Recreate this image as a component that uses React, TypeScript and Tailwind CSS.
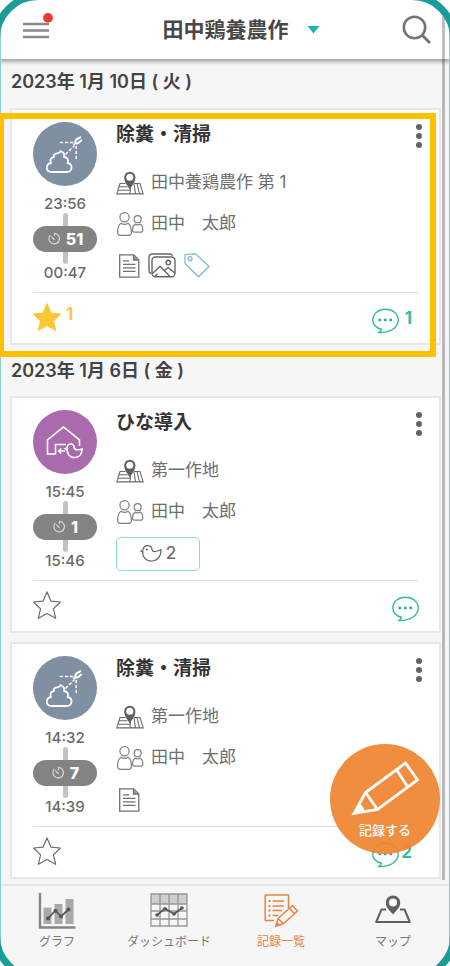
import React from "react";

type RecordItem = {
  id: string;
  kind: "clean" | "chick";
  title: string;
  place: string;
  person: string;
  start: string;
  end: string;
  minutes: number;
  stars?: number;
  comments?: number;
  attachments?: ("doc" | "image" | "tag")[];
  chicks?: number;
};

const cleanFirst: RecordItem = {
  id: "r1",
  kind: "clean",
  title: "除糞・清掃",
  place: "田中養鶏農作 第 1",
  person: "田中　太郎",
  start: "23:56",
  end: "00:47",
  minutes: 51,
  stars: 1,
  comments: 1,
  attachments: ["doc", "image", "tag"],
};

const laterRecords: RecordItem[] = [
  {
    id: "r2",
    kind: "chick",
    title: "ひな導入",
    place: "第一作地",
    person: "田中　太郎",
    start: "15:45",
    end: "15:46",
    minutes: 1,
    chicks: 2,
  },
  {
    id: "r3",
    kind: "clean",
    title: "除糞・清掃",
    place: "第一作地",
    person: "田中　太郎",
    start: "14:32",
    end: "14:39",
    minutes: 7,
    comments: 2,
    attachments: ["doc"],
  },
];

function CleanIcon() {
  return (
    <svg viewBox="0 0 64 64" className="size-16 rounded-full bg-[#8090a3]" fill="none" stroke="#fff" strokeWidth="1.8" strokeLinecap="round" strokeLinejoin="round" aria-hidden="true">
      <path d="M27.5 29C30.5 30 32 32.5 31 35C34.5 35.5 36 38 34.5 41C37.5 41.5 38.8 43.5 38.5 46C38.2 49 36.5 50 33.5 50H19C15.5 50 14 49 13.8 46C13.8 43.500 15 41.500 18 41C16.500 38 18 35.300 21 35C20.200 33 21.500 31.500 24 31.300C26 31 27.300 30.500 27.500 29Z" />
      <path d="M27.500 20.500h14M43.200 24.500v14M33 32l8-8" strokeWidth="1.500" strokeDasharray="2 3" />
      <path d="m44.500 16.500-1.800 2c-1.400 1.800.8 3.800 2.500 2.500l3-2.500M42.500 21l-1.500 1.500M47.200 15.200l-1.200 1.100" strokeWidth="2" />
    </svg>
  );
}

function ChickHouseIcon() {
  return (
    <svg viewBox="0 0 64 64" className="size-16 rounded-full bg-[#a96bae]" fill="none" stroke="#fff" strokeWidth="1.600" strokeLinejoin="miter" aria-hidden="true">
      <path d="M33 34.500H22.500V44h-8V30l16-13 16 13v6" />
      <path d="M32 41h-6.500M28.300 38.500 25.500 41l2.800 2.500" />
      <path d="M34.200 39.200c-.7-3 .9-5.200 3.200-5.200 2.500 0 3.700 1.800 3.800 3.600.2 2.400 4.300 2.700 7.900 1.500-.2 5.300-3.200 8.500-7.600 8.500-4.600 0-7.600-3.600-7.300-8.400Zm0-1.200-2 .8 1.800 1.200" />
    </svg>
  );
}

function ChickIcon() {
  return (
    <svg width="22" height="17" viewBox="0 0 22 17" fill="none" stroke="#666" strokeWidth="1.200" strokeLinejoin="round" aria-hidden="true">
      <path d="M3 4.800C3.400 2.300 5.200.7 7.600.7c2.700 0 4.300 1.900 4.500 4.100.2 2.500 4.600 2.200 8.900-.3.3 6.500-3.500 11.500-9.500 11.500-5.700 0-9.800-4.500-8.500-9.500L.7 6.200 3 4.800Z" />
      <circle cx="6.800" cy="4.500" r=".5" fill="#666" />
    </svg>
  );
}

function PlaceIcon() {
  return (
    <svg width="28" height="24" viewBox="0 0 28 24" fill="none" stroke="#6a6a6a" strokeWidth="1.100" aria-hidden="true">
      <path d="M9.500 12.500H4L.8 22.900h26.400L24 12.500h-6M3 15.700h8.500M2 19.200h12M14.500 17l-.5 6M18 13l1.500 9.700M21 12.700l2.500 10" />
      <path d="M13.800 18.500C11.800 14.800 8.200 11.500 8.200 6.300a5.600 5.600 0 0 1 11.200 0c0 5.200-3.600 8.500-5.600 12.200Z" fill="#606060" stroke="none" />
      <circle cx="13.800" cy="6.200" r="3.500" fill="#fff" stroke="none" />
    </svg>
  );
}

function PeopleIcon() {
  return (
    <svg width="28" height="24" viewBox="0 0 28 24" fill="none" stroke="#808080" strokeWidth="1.200" strokeLinejoin="round" aria-hidden="true">
      <circle cx="8.500" cy="5.200" r="4.600" />
      <path d="M5 11.200c2 1.300 5 1.300 7 0 2.500 1.500 3.400 5.300 3.400 9.100 0 2.100-.9 3.100-2.700 3.100H4.300c-1.800 0-2.700-1-2.700-3.100 0-3.800.9-7.600 3.400-9.100Z" />
      <circle cx="21.700" cy="7.200" r="3.500" />
      <path d="M19.200 12c1.500 1 3.500 1 5 0 1.900 1.300 2.600 3.700 2.600 6 0 1.500-.6 2.200-1.800 2.200h-6.600c-1.200 0-1.800-.7-1.800-2.200 0-2.300.7-4.700 2.600-6Z" />
    </svg>
  );
}

function DocIcon() {
  return (
    <svg width="22" height="24" viewBox="0 0 22 24" fill="none" stroke="#707070" strokeWidth="1.300" aria-hidden="true">
      <path d="M1.700.9h14.200l4.900 5v17.200H1.700V.9Z" />
      <path d="M15.500 1v5.200h5" fill="#999" />
      <path d="M5 6.800h6M5 10.300h12.500M5 13.800h12.500M5 17.300h12.500" />
    </svg>
  );
}

function ImageIcon() {
  return (
    <svg width="28" height="25" viewBox="0 0 28 25" fill="none" stroke="#666" strokeWidth="1.400" strokeLinejoin="round" aria-hidden="true">
      <path d="M3 20.500C1.500 20 1 19 1 17.500V4.500C1 2.300 2.200 1 4.500 1h17c1.700 0 2.600.5 3 1.800" />
      <rect x="4" y="4" width="23" height="19.800" rx="3.500" />
      <circle cx="20.300" cy="9.500" r="2.200" />
      <path d="m4.500 20.500 7.500-7.300 10 10.300M16.500 17.500l3.500-3 6.800 5.500M7 23.300l2.500-2.500" />
    </svg>
  );
}

function TagIcon() {
  return (
    <svg width="26" height="25" viewBox="0 0 26 25" fill="none" stroke="#79b2e0" strokeWidth="1.200" strokeLinejoin="round" aria-hidden="true">
      <path d="M1 1.500 11.700.9 25 13.500 14.500 23.800 1 10.500v-9Z" />
      <circle cx="6" cy="5.700" r="2" />
    </svg>
  );
}

function TimerIcon() {
  return (
    <svg width="14" height="14" viewBox="0 0 14 14" fill="none" stroke="#d8d8d8" strokeWidth="1.200" strokeLinecap="round" aria-hidden="true">
      <path d="M3 3.300a5.300 5.300 0 1 0 4.500-2v2.200M4.700 4.800l2.500 2.700" />
    </svg>
  );
}

function StarIcon({ filled }: { filled: boolean }) {
  return (
    <svg width="28" height="28" viewBox="0 0 28 28" fill={filled ? "#fcc737" : "none"} stroke={filled ? "#fcc737" : "#6b6b6b"} strokeWidth="1.200" strokeLinejoin="round" aria-hidden="true">
      <path d="m14 .9 4 9.300 9.400.8-7 6.900 2.300 9.400-8.700-4.800-8.700 4.800 2.300-9.400-7-6.900 9.400-.8L14 .9Z" />
    </svg>
  );
}

function CommentIcon() {
  return (
    <svg width="27" height="26" viewBox="0 0 27 26" fill="none" stroke="#35bca0" strokeWidth="1.400" strokeLinejoin="round" aria-hidden="true">
      <path d="M9.500 21.300C4.200 20 .8 16.500.8 12 .8 5.700 6.400 1.200 13.500 1.200S26.200 5.700 26.200 12c0 6.800-7 13-19.900 12.600 1.900-.8 3-1.800 3.200-3.300Z" />
      <g fill="#1eae92" stroke="none">
        <rect x="6.500" y="10.700" width="2.500" height="2.500" />
        <rect x="12" y="10.700" width="2.500" height="2.500" />
        <rect x="17.500" y="10.700" width="2.500" height="2.500" />
      </g>
    </svg>
  );
}

function RecordCard({ item }: { item: RecordItem }) {
  return (
    <article className="border-2 border-[#e8e8e8] bg-white pt-3 pr-5 pl-[21px]">
      <div className="flex gap-[19px] border-b border-[#dedede] pb-[5px]">
        <div className="flex w-16 shrink-0 flex-col items-center text-[15px] font-medium text-[#6a6a6a]">
          {item.kind === "clean" ? <CleanIcon /> : <ChickHouseIcon />}
          <time className="pt-2 leading-[19px]">{item.start}</time>
          <span className="h-[13px] w-[5px] rounded-t-full bg-[#c3c3c3]" />
          <span className="flex h-[26px] w-full items-center justify-center gap-[5px] rounded-full bg-[#838383] text-[16px] font-extrabold text-white">
            <TimerIcon />
            {item.minutes}
          </span>
          <span className="h-3 w-[5px] rounded-b-full bg-[#c3c3c3]" />
          <time className="leading-[18px]">{item.end}</time>
        </div>
        <div className="min-w-0 flex-1 text-[17px] text-[#6e6e6e]">
          <div className="flex h-10 items-start justify-between">
            <h3 className="text-[19px] leading-[26px] font-bold text-[#333]">{item.title}</h3>
            <button type="button" aria-label="メニュー" className="-mr-1 flex flex-col gap-[3px] px-px py-[2px]">
              <span className="size-[6px] rounded-full bg-[#646464]" />
              <span className="size-[6px] rounded-full bg-[#646464]" />
              <span className="size-[6px] rounded-full bg-[#646464]" />
            </button>
          </div>
          <p className="flex h-[41px] items-center gap-[7px]">
            <PlaceIcon />
            {item.place}
          </p>
          <p className="flex h-[41px] items-center gap-[7px]">
            <PeopleIcon />
            {item.person}
          </p>
          <div className="flex h-[43px] items-center gap-2 pl-[2px]">
            {item.attachments?.map((a) =>
              a === "doc" ? <DocIcon key={a} /> : a === "image" ? <ImageIcon key={a} /> : <TagIcon key={a} />
            )}
            {item.chicks !== undefined && (
              <button type="button" className="-ml-[2px] flex h-[34px] w-[84px] items-center justify-center gap-1 rounded-[5px] border border-[#8adbd2] font-medium">
                <ChickIcon />
                {item.chicks}
              </button>
            )}
          </div>
        </div>
      </div>
      <footer className="flex h-[50px] items-start justify-between pt-[10px] text-[17px] leading-[22px] font-bold">
        <button type="button" aria-label="お気に入り" className="flex items-start gap-[5px] text-[#fcc737]">
          <StarIcon filled={item.stars !== undefined} />
          {item.stars}
        </button>
        <button type="button" aria-label="コメント" className={item.comments ? "flex items-start gap-[2px] pt-[5px] pr-[7px] leading-5 text-[#35bca0]" : "flex pt-[5px]"}>
          <CommentIcon />
          {item.comments && <span className="w-[11px] text-right">{item.comments}</span>}
        </button>
      </footer>
    </article>
  );
}

function DateHeading({ children }: { children: React.ReactNode }) {
  return <h2 className="text-[18px] leading-6 font-semibold text-[#444]">{children}</h2>;
}

function GraphIcon() {
  return (
    <svg width="38" height="37" viewBox="0 0 38 37" fill="none" aria-hidden="true">
      <path d="M5.500 15.500h8V32h-8zM16.500 12h8v20h-8zM27.500 7h8v25h-8z" fill="#a9a9a9" />
      <path d="M2 1v34.500h35.500" stroke="#858585" strokeWidth="2.400" />
      <path d="m10 26.500 7.500-8 5.500 6 7.500-7" stroke="#555" strokeWidth="1.800" />
      <g fill="#555"><circle cx="10" cy="26.500" r="2" /><circle cx="17.500" cy="18.700" r="2" /><circle cx="23" cy="24.500" r="2" /><circle cx="30.500" cy="17.500" r="2" /></g>
    </svg>
  );
}

function DashboardIcon() {
  return (
    <svg width="38" height="37" viewBox="0 0 38 37" fill="none" aria-hidden="true">
      <path d="M1 2h36v10H1z" fill="#cfcfcf" />
      <path d="M1 2h36v32H1zM1 12h36M1 19h36M1 27h36M10 2v32M19 2v32M28 2v32" stroke="#969696" strokeWidth="1.300" />
      <path d="m7 23 8-6.500 9 5.500 8-6" stroke="#555" strokeWidth="1.800" />
      <g fill="#555"><circle cx="7" cy="23" r="1.800" /><circle cx="15" cy="16.700" r="1.800" /><circle cx="24" cy="22" r="1.800" /><circle cx="32" cy="16" r="1.800" /></g>
    </svg>
  );
}

function ListIcon() {
  return (
    <svg width="36" height="37" viewBox="0 0 36 37" fill="none" stroke="#e98343" strokeWidth="1.500" strokeLinejoin="round" aria-hidden="true">
      <path d="M11 28.500H2.200V3h23.300v13.500" />
      <path d="M9.500 9H21M9.500 14H21M9.500 18.500H19M9.500 23.500h6" />
      <path d="M5.500 9h2M5.500 14h2M5.500 18.500h2M5.500 23.500h2" strokeWidth="2" />
      <path d="m13 34 2-7.500 14.500-13 5 5.500-14 12.800L13 34Zm2-7.500 5.500 5.300M26.500 16.300l5 5.500" />
      <path d="m13 34 .8-3.200 2.200 2.200z" fill="#e98343" />
    </svg>
  );
}

function MapIcon() {
  return (
    <svg width="36" height="37" viewBox="0 0 36 37" fill="none" stroke="#606060" strokeWidth="2" strokeLinejoin="round" aria-hidden="true">
      <path d="M11 17.500H6.500L1.200 30h33.600l-5.300-12.500H25" />
      <path d="M18 22.500c-2.500-3.500-7.200-6.500-7.200-11.800a7.200 7.200 0 0 1 14.400 0c0 5.300-4.700 8.300-7.200 11.800Z" fill="#606060" stroke="none" />
      <circle cx="18" cy="10.500" r="4" fill="#f6f6f6" stroke="none" />
    </svg>
  );
}

const tabs = [
  { label: "グラフ", Icon: GraphIcon, active: false },
  { label: "ダッシュボード", Icon: DashboardIcon, active: false },
  { label: "記録一覧", Icon: ListIcon, active: true },
  { label: "マップ", Icon: MapIcon, active: false },
];

export default function App() {
  return (
    <div lang="ja" className="relative flex h-screen flex-col overflow-hidden bg-[#f6f6f6] font-['Inter','Noto_Sans_CJK_JP',sans-serif]">
      <header className="relative z-10 flex h-[59px] shrink-0 items-center justify-between bg-white pr-[18px] pl-[22px] shadow-[0_2px_4px_1px_rgba(0,0,0,0.32)]">
        <button type="button" aria-label="メニューを開く">
          <svg width="34" height="34" viewBox="0 0 34 34" aria-hidden="true">
            <path d="M1 11h26M1 17.500h26M1 24h26" stroke="#8a8a8a" strokeWidth="2.400" />
            <circle cx="26" cy="4.900" r="4.900" fill="#ee3737" />
          </svg>
        </button>
        <button type="button" className="flex items-center gap-[18px] pl-6 text-[21px] leading-7 font-bold text-[#484848]">
          田中鶏養農作
          <svg width="13" height="8" viewBox="0 0 13 8" aria-hidden="true"><path d="M.5 0h12l-6 7.500z" fill="#1fb5aa" /></svg>
        </button>
        <button type="button" aria-label="検索">
          <svg width="30" height="30" viewBox="0 0 30 30" fill="none" stroke="#757575" aria-hidden="true">
            <circle cx="12.500" cy="12.500" r="10.700" strokeWidth="2.600" />
            <path d="m20 20 8 8" strokeWidth="3" />
          </svg>
        </button>
      </header>

      <main className="relative min-h-0 flex-1">
        <div className="h-full overflow-hidden pr-[9px] pl-[10px]">
          <section>
            <div className="px-px pt-[11px] pb-[14px]">
              <DateHeading>2023年 1月 10日 ( 火 )</DateHeading>
            </div>
            <div className="relative">
              <RecordCard item={cleanFirst} />
              <div className="pointer-events-none absolute top-[5px] right-[5px] -bottom-3 -left-3 z-40 border-[6px] border-[#ffc000]" />
            </div>
          </section>
          <section>
            <div className="px-px pt-[14px] pb-[13px]">
              <DateHeading>2023年 1月 6日 ( 金 )</DateHeading>
            </div>
            <div className="flex flex-col gap-[9px]">
              {laterRecords.map((item) => (
                <RecordCard key={item.id} item={item} />
              ))}
            </div>
          </section>
        </div>
        <button type="button" className="absolute right-[10px] bottom-[30px] size-[110px] rounded-full bg-[#f08430]/93 text-[13px] text-white">
          <svg viewBox="0 0 110 110" className="absolute inset-0" fill="none" stroke="#fff" strokeWidth="2.800" aria-hidden="true">
            <path d="m24 69.500 11.500-21 40-29.500L87.500 36 47.500 65.500 24 69.500ZM35.500 48.500l12 17M66.700 26l11 17" />
            <path d="m24 69.500 5-9.500c3.500 1 5 3.500 5.500 7.500z" fill="#fff" stroke="none" />
          </svg>
          <span className="block pt-[62px] leading-5 font-medium">記録する</span>
        </button>
      </main>

      <nav className="grid h-[82px] shrink-0 grid-cols-4 border-t-2 border-[#e6e6e6] px-px">
        {tabs.map(({ label, Icon, active }) => (
          <a key={label} href="#" className={active ? "flex flex-col items-center pt-[6px] text-[12px] leading-4 text-[#e98343]" : "flex flex-col items-center pt-[6px] text-[12px] leading-4 text-[#777]"}>
            <Icon />
            <span className="pt-[5px] whitespace-nowrap">{label}</span>
          </a>
        ))}
      </nav>

      <div className="pointer-events-none absolute top-4 right-[5px] bottom-[86px] z-20 w-[3px] bg-black/25" />
      <div className="pointer-events-none absolute inset-0 z-20 border-x border-[#8ccfcc]" />
      <div className="pointer-events-none absolute -top-[7px] -right-[7px] -bottom-[15px] -left-[7px] z-30 rounded-[45px] border-7 border-[#1a9c97] shadow-[0_0_0_30px_white]" />
    </div>
  );
}
